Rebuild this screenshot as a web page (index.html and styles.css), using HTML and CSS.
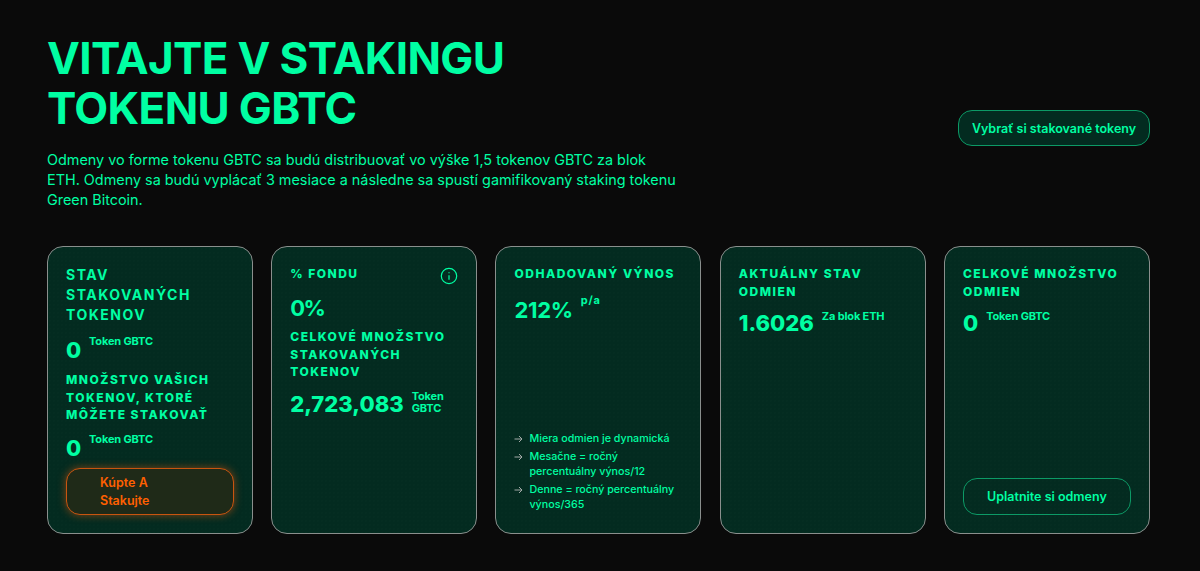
FILE: index.html
```html
<!DOCTYPE html>
<html lang="sk">
<head>
<meta charset="utf-8">
<title>Staking GBTC</title>
<link rel="stylesheet" href="styles.css">
</head>
<body>
<main class="page">
  <header class="hero">
    <div class="intro">
      <h1>VITAJTE V STAKINGU<br>TOKENU GBTC</h1>
      <p>Odmeny vo forme tokenu GBTC sa budú distribuovať vo výške 1,5 tokenov GBTC za blok<br>ETH. Odmeny sa budú vyplácať 3 mesiace a následne sa spustí gamifikovaný staking tokenu<br>Green Bitcoin.</p>
    </div>
    <button class="btn btn-top">Vybrať si stakované tokeny</button>
  </header>
  <section class="cards">
    <article class="card card-one">
      <h2 class="big-title">STAV STAKOVANÝCH TOKENOV</h2>
      <div class="stat s1"><span class="num">0</span><span class="unit">Token GBTC</span></div>
      <h2 class="t2">MNOŽSTVO VAŠICH TOKENOV, KTORÉ MÔŽETE STAKOVAŤ</h2>
      <div class="stat s2"><span class="num">0</span><span class="unit">Token GBTC</span></div>
      <button class="btn btn-buy"><span>Kúpte A Stakujte</span></button>
    </article>
    <article class="card card-two">
      <div class="head">
        <h2>% FONDU</h2>
        <svg class="info" width="18" height="18" viewBox="0 0 18 18" fill="none" stroke="currentColor" stroke-width="1.2"><circle cx="9" cy="9" r="7.7"/><path d="M9 8.2v4.6"/><path d="M9 5.2v1"/></svg>
      </div>
      <div class="num pct">0%</div>
      <h2 class="t3">CELKOVÉ MNOŽSTVO STAKOVANÝCH TOKENOV</h2>
      <div class="stat s3"><span class="num">2,723,083</span><span class="unit wrap">Token GBTC</span></div>
    </article>
    <article class="card card-three">
      <h2 class="t4">ODHADOVANÝ VÝNOS</h2>
      <div class="stat s4"><span class="num">212%</span><span class="unit pa">p/a</span></div>
      <ul class="notes">
        <li><svg width="9" height="8" viewBox="0 0 9 8" fill="none" stroke="currentColor" stroke-width="1"><path d="M0.5 4h7.5M5 1l3 3-3 3"/></svg><span>Miera odmien je dynamická</span></li>
        <li><svg width="9" height="8" viewBox="0 0 9 8" fill="none" stroke="currentColor" stroke-width="1"><path d="M0.5 4h7.5M5 1l3 3-3 3"/></svg><span>Mesačne = ročný percentuálny výnos/12</span></li>
        <li><svg width="9" height="8" viewBox="0 0 9 8" fill="none" stroke="currentColor" stroke-width="1"><path d="M0.5 4h7.5M5 1l3 3-3 3"/></svg><span>Denne = ročný percentuálny výnos/365</span></li>
      </ul>
    </article>
    <article class="card card-four">
      <h2 class="t4">AKTUÁLNY STAV ODMIEN</h2>
      <div class="stat s5"><span class="num">1.6026</span><span class="unit">Za blok ETH</span></div>
    </article>
    <article class="card card-five">
      <h2 class="t4">CELKOVÉ MNOŽSTVO ODMIEN</h2>
      <div class="stat s5"><span class="num">0</span><span class="unit">Token GBTC</span></div>
      <button class="btn btn-claim">Uplatnite si odmeny</button>
    </article>
  </section>
</main>
</body>
</html>
```
FILE: styles.css
```css
* { box-sizing: border-box; }
html, body { margin: 0; height: 100%; }
body {
  background: #0a0a0a;
  color: #00ffa3;
  font-family: Inter, "Liberation Sans", sans-serif;
  overflow: hidden;
}
.page { padding: 33px 50px 0 47px; }
h1, h2, p, ul { margin: 0; padding: 0; }
.hero {
  display: flex;
  justify-content: space-between;
  align-items: center;
  height: 213px;
}
.intro { width: 700px; align-self: flex-start; }
h1 {
  font-size: 44px;
  line-height: 50px;
  font-weight: 700;
  letter-spacing: -0.65px;
  white-space: nowrap;
}
.intro p {
  margin-top: 17px;
  font-size: 14.4px;
  line-height: 20px;
  font-weight: 400;
  white-space: nowrap;
}
.btn {
  font-family: inherit;
  color: #00ffa3;
  font-weight: 600;
  border: 1px solid #0c9a66;
  background: #032b20;
  border-radius: 14px;
  cursor: pointer;
}
.btn-top {
  width: 192px;
  height: 36px;
  padding: 0;
  font-size: 12.5px;
  margin-bottom: 23px;
}
.cards {
  display: grid;
  grid-template-columns: repeat(5, 206px);
  column-gap: 18.24px;
}
.card {
  height: 288px;
  border: 1px solid #8a8f8d;
  border-radius: 16px;
  background-color: #032b20;
  background-image: radial-gradient(circle, #062f24 0.6px, transparent 0.8px);
  background-size: 4px 4px;
  padding: 18px;
  display: flex;
  flex-direction: column;
}
.card h2 {
  font-size: 12px;
  line-height: 18px;
  font-weight: 800;
  letter-spacing: 1.5px;
}
.card .big-title { font-size: 14px; line-height: 20px; letter-spacing: 1.5px; font-weight: 700; padding-top: 1px; }
.card .t2 { margin-top: 7px; line-height: 17.5px; }
.card .t3 { margin-top: 6px; line-height: 17.5px; }
.stat { display: flex; align-items: flex-start; }
.num { font-size: 22px; line-height: 28px; font-weight: 800; }
.unit { font-size: 11px; line-height: 13px; font-weight: 700; margin-left: 8px; letter-spacing: -0.15px; }
.s1 { margin-top: 11px; }
.s1 .num, .s2 .num { width: 12px; }
.s1 .unit, .s2 .unit { margin-left: 11px; margin-top: -1px; }
.s2 { margin-top: 10px; }
.s3 { margin-top: 9px; }
.s3 .unit { width: 48px; line-height: 12.5px; }
.s4 { margin-top: 13px; }
.s4 .num, .pct { font-weight: 700; letter-spacing: -0.3px; }
.s4 .pa { margin-left: 8px; margin-top: -2px; letter-spacing: 0.7px; }
.s5 { margin-top: 8px; }
.s5 .unit { margin-top: 1px; }
.card-one { padding-top: 17px; }
.card-two .head { display: flex; justify-content: space-between; align-items: flex-start; }
.card-two .info { margin: 2px 0.5px 0 0; }
.pct { margin-top: 9px; letter-spacing: -1.5px; }
.btn-buy {
  margin-top: auto;
  height: 47px;
  width: 168px;
  border: 1px solid #c85510;
  color: #ff6000;
  background: #1f2a18;
  font-size: 12.5px;
  line-height: 18px;
  text-align: left;
  padding: 0 0 0 33px;
  box-shadow: 0 0 8px rgba(255, 92, 10, 0.5);
}
.btn-buy span { display: block; width: 70px; }
.notes {
  list-style: none;
  margin-top: auto;
  margin-bottom: 3px;
  font-size: 10.7px;
  line-height: 15px;
  font-weight: 500;
}
.notes li { display: flex; margin-top: 3px; }
.notes svg { color: #a3aaa7; flex: none; margin: 4px 6px 0 0; }
.btn-claim {
  margin-top: auto;
  height: 37px;
  width: 168px;
  font-size: 12.5px;
  background: transparent;
  padding: 0 0 1px;
}
```
